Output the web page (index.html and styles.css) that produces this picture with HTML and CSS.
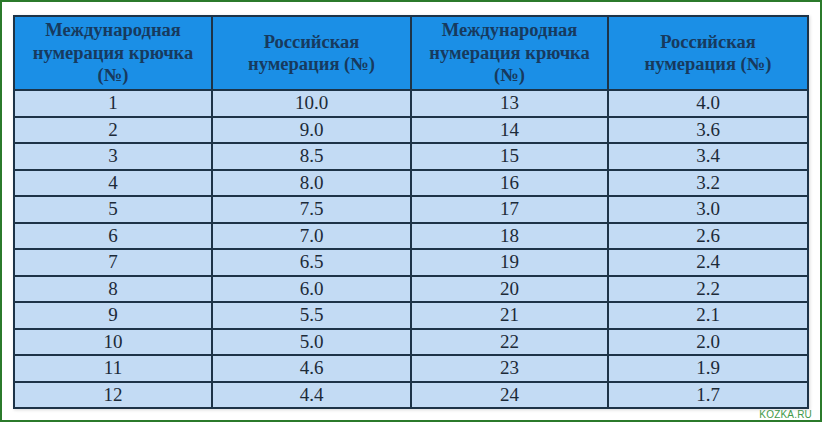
FILE: index.html
```html
<!DOCTYPE html>
<html lang="ru">
<head>
<meta charset="utf-8">
<link rel="stylesheet" href="styles.css">
</head>
<body>
<div class="frame">
  <table class="sizes">
    <colgroup><col class="c1"><col class="c2"><col class="c3"><col class="c4"></colgroup>
    <thead>
      <tr>
        <th>Международная<br>нумерация крючка<br>(№)</th>
        <th>Российская<br>нумерация (№)</th>
        <th>Международная<br>нумерация крючка<br>(№)</th>
        <th>Российская<br>нумерация (№)</th>
      </tr>
    </thead>
    <tbody>
      <tr><td>1</td><td>10.0</td><td>13</td><td>4.0</td></tr>
      <tr><td>2</td><td>9.0</td><td>14</td><td>3.6</td></tr>
      <tr><td>3</td><td>8.5</td><td>15</td><td>3.4</td></tr>
      <tr><td>4</td><td>8.0</td><td>16</td><td>3.2</td></tr>
      <tr><td>5</td><td>7.5</td><td>17</td><td>3.0</td></tr>
      <tr><td>6</td><td>7.0</td><td>18</td><td>2.6</td></tr>
      <tr><td>7</td><td>6.5</td><td>19</td><td>2.4</td></tr>
      <tr><td>8</td><td>6.0</td><td>20</td><td>2.2</td></tr>
      <tr><td>9</td><td>5.5</td><td>21</td><td>2.1</td></tr>
      <tr><td>10</td><td>5.0</td><td>22</td><td>2.0</td></tr>
      <tr><td>11</td><td>4.6</td><td>23</td><td>1.9</td></tr>
      <tr><td>12</td><td>4.4</td><td>24</td><td>1.7</td></tr>
    </tbody>
  </table>
  <div class="mark">KOZKA.RU</div>
</div>
</body>
</html>
```

FILE: styles.css
```css
html, body {
  margin: 0;
  padding: 0;
  background: #ffffff;
}
.frame {
  box-sizing: border-box;
  width: 822px;
  height: 422px;
  border: 2px solid #2b7a2b;
  padding: 13px 0 0 11px;
  display: flex;
  flex-direction: column;
  align-items: flex-start;
  font-family: "Liberation Serif", "Times New Roman", serif;
}
.sizes {
  border-collapse: collapse;
  table-layout: fixed;
  width: 794px;
  border: 2px solid #1d3347;
  box-shadow: 1px 1px 3px rgba(0, 0, 0, 0.15);
}
.c1 { width: 198px; }
.c2 { width: 199px; }
.c3 { width: 197px; }
.c4 { width: 200px; }
.sizes th {
  background: #1b8fe6;
  color: #173a5e;
  font-family: "Liberation Serif", "Times New Roman", serif;
  font-weight: bold;
  font-size: 18.5px;
  line-height: 22.5px;
  height: 72px;
  padding: 0;
  text-align: center;
  vertical-align: middle;
  border: 2px solid #1d3347;
}
.sizes td {
  background: #c3dbf4;
  color: #1c2a38;
  font-size: 19px;
  line-height: 20px;
  height: 24.5px;
  padding: 0;
  text-align: center;
  vertical-align: middle;
  border: 2px solid #1d3347;
}
.mark {
  align-self: flex-end;
  margin: 1px 8px 0 0;
  font-family: "Liberation Sans", Arial, sans-serif;
  font-size: 10px;
  line-height: 10px;
  color: #3f9a4a;
  letter-spacing: 0.2px;
}
```
